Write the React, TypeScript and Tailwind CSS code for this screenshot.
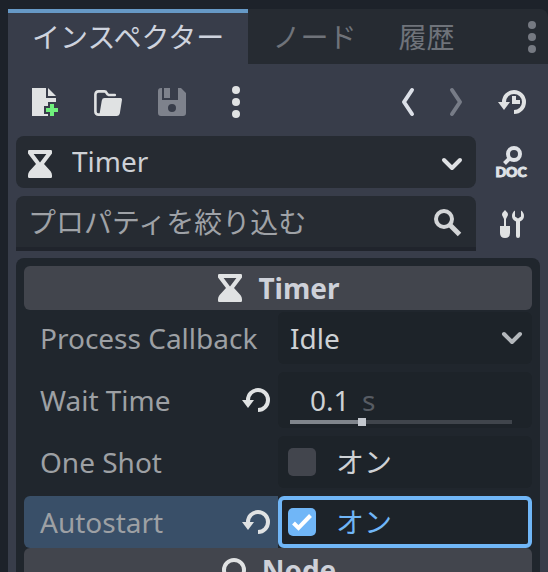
import { useState } from "react";
import type { ReactNode } from "react";

type IconProps = { className?: string };

function TimerIcon({ className = "" }: IconProps) {
  return (
    <svg viewBox="0 0 16 16" className={`size-8 shrink-0 fill-[#e0e2e3] ${className}`} aria-hidden="true">
      <path
        fillRule="evenodd"
        d="M2.600 1h10.800q.6 0 .6.6V2.800L10 8l3.300 3.600q.7.9.7 2v.8q0 .6-.6.6H2.600q-.6 0-.6-.6v-.8q0-1.100.7-2L6 8 2 2.800V1.600q0-.6.6-.6zM4.800 3 8 7.200 11.200 3z"
      />
    </svg>
  );
}

function NodeIcon() {
  return (
    <svg viewBox="0 0 16 16" className="size-8 shrink-0" aria-hidden="true">
      <circle cx="8" cy="8" r="5" fill="none" stroke="#e0e2e3" strokeWidth="2" />
    </svg>
  );
}

function NewFileIcon() {
  return (
    <svg viewBox="0 0 16 16" className="size-8" aria-hidden="true">
      <path fill="#e0e2e3" d="M2 1v14h8v-1H8v-4h2V8h4V6H9V1zM10 1v4h4z" />
      <path fill="#6ff07c" d="M11 9h2v2h2v2h-2v2h-2v-2H9v-2h2z" />
    </svg>
  );
}

function FolderIcon() {
  return (
    <svg viewBox="0 0 16 16" className="size-8" aria-hidden="true">
      <path
        d="M4.500 14.300H3.300Q1.700 14.300 1.700 12.700V4.300Q1.700 2.700 3.300 2.700H6.200Q7 2.700 7.300 3.500T8.400 4.500H11.400"
        fill="none"
        stroke="#e0e2e3"
        strokeWidth="1.300"
        strokeLinecap="round"
      />
      <path fill="#e0e2e3" d="M6.300 6H14.300Q15.100 6 15 6.900L13.900 13.800Q13.700 15 12.500 15H3.600L4.900 7.200Q5.100 6 6.300 6z" />
    </svg>
  );
}

function SaveIcon() {
  return (
    <svg viewBox="0 0 16 16" className="size-8 fill-[#7e828c]" aria-hidden="true">
      <path
        fillRule="evenodd"
        d="M2.500 1H3v6h8V1h1.500L15 3.500V13.500Q15 15 13.500 15H2.500Q1 15 1 13.500V2.500Q1 1 2.500 1zM8 9a2 2 0 1 0 0 4 2 2 0 0 0 0-4z"
      />
      <path d="M4 1h3v5H4z" />
    </svg>
  );
}

function DotsIcon({ className }: IconProps) {
  return (
    <svg viewBox="0 0 16 32" className={`h-8 w-4 ${className}`} aria-hidden="true">
      <circle cx="8" cy="4" r="4" />
      <circle cx="8" cy="16" r="4" />
      <circle cx="8" cy="28" r="4" />
    </svg>
  );
}

function AngleIcon({ d, color }: { d: string; color: string }) {
  return (
    <svg viewBox="0 0 16 32" className="h-8 w-4" aria-hidden="true">
      <path d={d} fill="none" stroke={color} strokeWidth="4" strokeLinecap="round" strokeLinejoin="round" />
    </svg>
  );
}

function RevertIcon({ clock = false }: { clock?: boolean }) {
  return (
    <svg viewBox="0 0 16 16" className="size-8 fill-[#e0e2e3]" aria-hidden="true">
      <path d="M9 13A5 5 0 1 0 4 8v1" fill="none" stroke="#e0e2e3" strokeWidth="2" />
      <path d="M1 8h6l-3 4z" />
      {clock && <path d="M8 5h2v2h2v2H8z" />}
    </svg>
  );
}

function ChevronIcon({ className = "" }: IconProps) {
  return (
    <svg viewBox="0 0 24 24" className={`pointer-events-none size-6 ${className}`} aria-hidden="true">
      <path d="M4 8l8 8 8-8" fill="none" stroke="currentColor" strokeWidth="4" strokeLinecap="round" strokeLinejoin="round" />
    </svg>
  );
}

function SearchIcon({ className = "" }: IconProps) {
  return (
    <svg viewBox="0 0 32 32" className={`pointer-events-none size-8 ${className}`} aria-hidden="true">
      <g fill="none" stroke="#d3d5d7" strokeWidth="4">
        <circle cx="12" cy="13" r="8" />
        <path d="M17.500 18.500 27.500 28.500" strokeWidth="5" />
      </g>
    </svg>
  );
}

function DocIcon() {
  return (
    <svg viewBox="0 0 32 32" className="size-8 overflow-visible" aria-hidden="true">
      <g fill="none" stroke="#dfe2e6" strokeWidth="4">
        <circle cx="18" cy="8" r="6" />
        <path d="M13.500 12.500 8.500 17.500" />
      </g>
      <text
        x="15"
        y="31"
        textAnchor="middle"
        className="fill-[#dfe2e6] stroke-[#dfe2e6] stroke-1 font-[Lato,sans-serif] text-[14px] font-black"
      >
        DOC
      </text>
    </svg>
  );
}

function ToolsIcon() {
  return (
    <svg viewBox="0 0 32 32" className="size-8 fill-[#e0e2e3]" aria-hidden="true">
      <path d="M9 2Q12 4.500 12 7L10 11V18H14V25Q14 30 9 30T4 25V18H8V11L6 7Q6 4.500 9 2z" />
      <path d="M19 2.500V8.500L22 10.500 25 8.500V2.500Q28 4.500 28 8T24 13.500V28Q24 30 22 30T20 28V13.500Q16 11.500 16 8T19 2.500z" />
    </svg>
  );
}

function IconButton({ label, disabled, children }: { label: string; disabled?: boolean; children: ReactNode }) {
  return (
    <button type="button" aria-label={label} disabled={disabled} className="flex shrink-0 items-center justify-center">
      {children}
    </button>
  );
}

function SectionHeader({ icon, title }: { icon: ReactNode; title: string }) {
  return (
    <h2 className="flex h-11 items-center justify-center gap-3 rounded-md bg-[#42454d] pr-0.5 font-bold text-[#ced1d9]">
      {icon}
      {title}
    </h2>
  );
}

function LabelCell({ id, label, revert, active }: { id: string; label: string; revert?: boolean; active?: boolean }) {
  return (
    <div className={`flex items-center justify-between rounded-l-md pr-1.5 pl-4 ${active ? "bg-[#394f68]" : ""}`}>
      <label htmlFor={id} className="whitespace-nowrap text-[#9da0a4]">
        {label}
      </label>
      {revert && (
        <IconButton label={`Revert ${label}`}>
          <RevertIcon />
        </IconButton>
      )}
    </div>
  );
}

function CheckCell({ id, initial, focused }: { id: string; initial: boolean; focused?: boolean }) {
  const [on, setOn] = useState(initial);
  return (
    <label
      className={`flex items-center gap-5 rounded-md border-4 bg-[#1d2329] pl-1.5 ${
        focused ? "border-[#70b6f7] text-[#70b6f7]" : "border-transparent text-[#ced1d4]"
      }`}
    >
      <span className="grid size-7">
        <input
          id={id}
          type="checkbox"
          checked={on}
          onChange={(e) => setOn(e.target.checked)}
          className="col-start-1 row-start-1 size-7 appearance-none rounded-[5px] bg-[#42454d] outline-none checked:bg-[#70b6f7]"
        />
        {on && (
          <svg viewBox="0 0 28 28" className="pointer-events-none col-start-1 row-start-1 size-7" aria-hidden="true">
            <path d="M5.500 15l5 5L22.500 7.500" fill="none" stroke="#fff" strokeWidth="4" />
          </svg>
        )}
      </span>
      オン
    </label>
  );
}

export default function App() {
  const [slider, setSlider] = useState(32);
  const [wait, setWait] = useState("0.1");

  return (
    <div className="flex h-screen flex-col overflow-hidden bg-[#1d222a] pt-[9px] pl-2 font-['Noto_Sans','Noto_Sans_CJK_JP',sans-serif] text-[28px] leading-10">
      <nav className="flex h-[55px] shrink-0 rounded-tr-lg bg-[#262b32] whitespace-nowrap text-[#6f737a]">
        <button type="button" className="border-t-4 border-[#6699c6] bg-[#383d4a] px-6 pb-1 text-[#ced3de]">
          インスペクター
        </button>
        <button type="button" className="px-6">
          ノード
        </button>
        <button type="button" className="px-[18px]">
          履歴
        </button>
        <button type="button" aria-label="Dock menu" className="ml-auto px-2">
          <DotsIcon className="fill-[#767a82]" />
        </button>
      </nav>

      <main className="flex min-h-0 flex-1 flex-col bg-[#383d4a] px-2">
        <div className="flex h-[72px] shrink-0 items-center gap-8 px-3 pt-1">
          <IconButton label="New resource">
            <NewFileIcon />
          </IconButton>
          <IconButton label="Load resource">
            <FolderIcon />
          </IconButton>
          <IconButton label="Save resource" disabled>
            <SaveIcon />
          </IconButton>
          <div className="flex w-8 justify-center">
            <IconButton label="Resource options">
              <DotsIcon className="fill-[#e0e2e3]" />
            </IconButton>
          </div>
          <div className="ml-auto flex gap-8">
            <IconButton label="Previous object">
              <AngleIcon d="M12 4 4 16l8 12" color="#dce0e8" />
            </IconButton>
            <IconButton label="Next object" disabled>
              <AngleIcon d="M4 4l8 12-8 12" color="#777c87" />
            </IconButton>
            <IconButton label="Object history">
              <RevertIcon clock />
            </IconButton>
          </div>
        </div>

        <div className="grid shrink-0 grid-cols-[1fr_56px] gap-2">
          <div className="grid h-13 items-center rounded-lg bg-[#262b32]">
            <select
              aria-label="Object"
              className="col-start-1 row-start-1 h-13 appearance-none bg-transparent pb-0.5 pl-14 text-[#ced1d6] outline-none"
            >
              <option>Timer</option>
            </select>
            <TimerIcon className="pointer-events-none col-start-1 row-start-1 mt-1 ml-2" />
            <ChevronIcon className="col-start-1 row-start-1 mt-1 mr-3 justify-self-end text-[#dfe1e4]" />
          </div>
          <IconButton label="Open documentation">
            <DocIcon />
          </IconButton>
          <div className="grid h-[55px] items-center rounded-t-lg border-b-4 border-[#20242c] bg-[#262b32]">
            <input
              type="search"
              aria-label="プロパティを絞り込む"
              placeholder="プロパティを絞り込む"
              className="col-start-1 row-start-1 h-12 min-w-0 bg-transparent pr-12 pl-3 outline-none placeholder:text-[#9fa2a7]"
            />
            <SearchIcon className="col-start-1 row-start-1 mr-3 justify-self-end" />
          </div>
          <IconButton label="Manage properties">
            <ToolsIcon />
          </IconButton>
        </div>

        <section className="mt-[7px] flex-1 rounded-t-lg bg-[#20262d] p-2">
          <SectionHeader icon={<TimerIcon />} title="Timer" />
          <div className="mt-0.5 flex flex-col gap-2">
            <div className="grid h-13 grid-cols-2">
              <LabelCell id="callback" label="Process Callback" />
              <div className="grid items-center rounded-md bg-[#1d2329]">
                <select
                  id="callback"
                  className="col-start-1 row-start-1 h-13 appearance-none bg-transparent pl-3 text-[#ced1d4] outline-none"
                >
                  <option>Idle</option>
                  <option>Physics</option>
                </select>
                <ChevronIcon className="col-start-1 row-start-1 mr-2 justify-self-end text-[#b4b8bc]" />
              </div>
            </div>

            <div className="grid h-14 grid-cols-2">
              <LabelCell id="wait" label="Wait Time" revert />
              <div className="rounded-md bg-[#1d2329] pt-2 pr-5 pl-3">
                <div className="flex h-10 items-center gap-2 pl-5 text-[#ced1d4]">
                  <input
                    id="wait"
                    type="text"
                    inputMode="decimal"
                    value={wait}
                    onChange={(e) => setWait(e.target.value)}
                    className="h-10 w-11 bg-transparent outline-none"
                  />
                  <span className="text-[#575c63]">s</span>
                </div>
                <input
                  type="range"
                  aria-label="Wait Time"
                  min={0}
                  max={100}
                  value={slider}
                  onChange={(e) => setSlider(Number(e.target.value))}
                  style={{
                    backgroundImage: `linear-gradient(to right, #80858c ${slider}%, #40454c ${slider}%)`,
                  }}
                  className="-mt-0.5 block h-2 w-full appearance-none bg-[length:100%_4px] bg-center bg-no-repeat outline-none [&::-webkit-slider-thumb]:size-2 [&::-webkit-slider-thumb]:appearance-none [&::-webkit-slider-thumb]:bg-[#c3c7ce]"
                />
              </div>
            </div>

            <div className="grid h-13 grid-cols-2">
              <LabelCell id="oneshot" label="One Shot" />
              <CheckCell id="oneshot" initial={false} />
            </div>

            <div className="grid h-13 grid-cols-2">
              <LabelCell id="autostart" label="Autostart" revert active />
              <CheckCell id="autostart" initial focused />
            </div>
          </div>
          <SectionHeader icon={<NodeIcon />} title="Node" />
        </section>
      </main>
    </div>
  );
}
